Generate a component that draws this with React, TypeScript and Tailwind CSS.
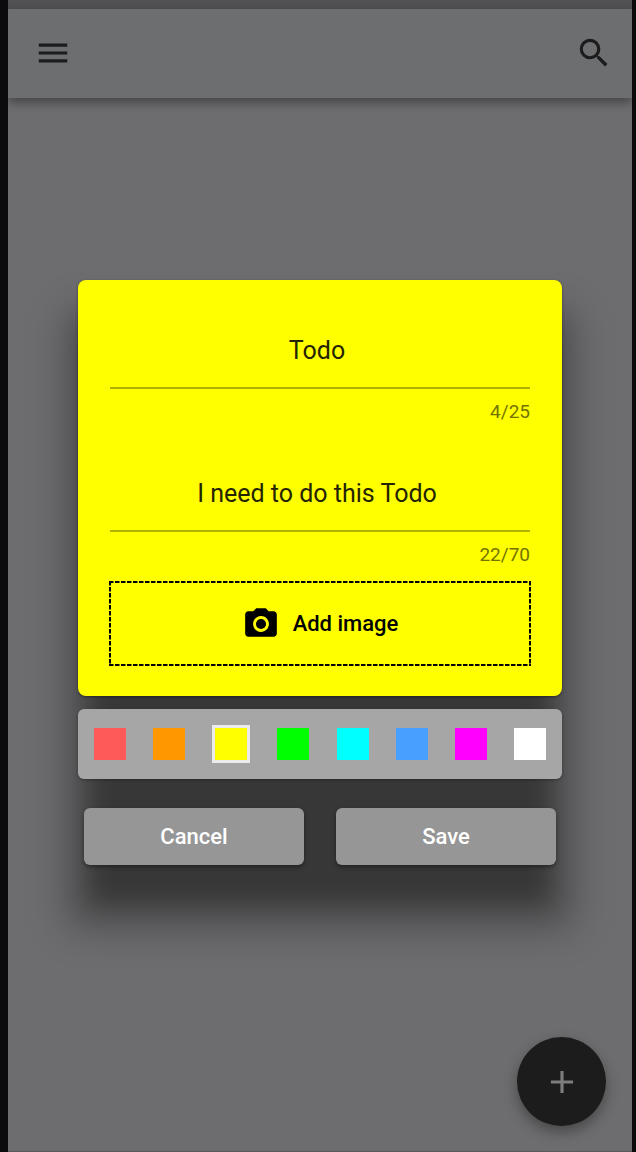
import { useState } from "react";
import { MdAdd, MdCameraAlt, MdMenu, MdSearch } from "react-icons/md";

const swatches = [
  { name: "Red", color: "bg-[#ff5a5a]" },
  { name: "Orange", color: "bg-[#ff9800]" },
  { name: "Yellow", color: "bg-[#ffff00]" },
  { name: "Green", color: "bg-[#00ff00]" },
  { name: "Cyan", color: "bg-[#00ffff]" },
  { name: "Blue", color: "bg-[#489fff]" },
  { name: "Magenta", color: "bg-[#ff00ff]" },
  { name: "White", color: "bg-white" },
];

type FieldProps = {
  label: string;
  value: string;
  max: number;
  onChange: (value: string) => void;
};

function Field({ label, value, max, onChange }: FieldProps) {
  return (
    <label className="flex flex-col">
      <input
        aria-label={label}
        value={value}
        maxLength={max}
        onChange={(e) => onChange(e.target.value)}
        className="h-[77px] w-full border-b-2 border-[#b0b000] bg-transparent pt-0.5 pr-1.5 text-center text-[25px] text-[#242400] outline-none"
      />
      <span className="mt-[11px] self-end text-[19px] leading-6 text-[#737300]">
        {value.length}/{max}
      </span>
    </label>
  );
}

function Header() {
  return (
    <header className="flex h-[89px] items-center justify-between bg-[#6d6e70] pr-[19px] pb-0.5 pl-[26px] text-[#1c1c1c] shadow-[0_4px_10px_rgba(0,0,0,0.4)]">
      <button type="button" aria-label="Menu">
        <MdMenu size={38} />
      </button>
      <button type="button" aria-label="Search">
        <MdSearch size={38} />
      </button>
    </header>
  );
}

function TodoDialog() {
  const [title, setTitle] = useState("Todo");
  const [body, setBody] = useState("I need to do this Todo");
  const [selected, setSelected] = useState(2);

  return (
    <form
      role="dialog"
      aria-label="Todo"
      className="relative w-full"
      onSubmit={(e) => e.preventDefault()}
    >
      <div className="absolute inset-x-[-10px] top-8 bottom-[-56px] bg-black/30 blur-[19px]" />
      <div className="absolute inset-x-3 top-10 bottom-[-32px] bg-black/27 blur-[12px]" />

      <div className="relative flex flex-col">
        <section
          className={`rounded-lg px-8 pt-8 pb-[30px] shadow-[0_1px_3px_rgba(0,0,0,0.4)] ${swatches[selected].color}`}
        >
          <div className="flex flex-col gap-[31px]">
            <Field label="Title" value={title} max={25} onChange={setTitle} />
            <Field label="Description" value={body} max={70} onChange={setBody} />
          </div>
          <button
            type="button"
            className="-mx-px mt-3.5 flex h-[85px] w-[calc(100%+2px)] items-center justify-center gap-[13px] text-[22px] font-medium text-black [background:repeating-linear-gradient(90deg,#000_0_4px,transparent_5px_6px)_top/100%_2px_no-repeat,repeating-linear-gradient(90deg,#000_0_4px,transparent_5px_6px)_bottom/100%_2px_no-repeat,repeating-linear-gradient(180deg,#000_0_4px,transparent_5px_6px)_left/2px_100%_no-repeat,repeating-linear-gradient(180deg,#000_0_4px,transparent_5px_6px)_right/2px_100%_no-repeat]"
          >
            <MdCameraAlt size={38} />
            Add image
          </button>
        </section>

        <div
          role="radiogroup"
          aria-label="Colour"
          className="mt-[13px] flex h-[70px] items-center justify-between rounded-md bg-[#a6a6a6] px-4 shadow-[0_1px_3px_rgba(0,0,0,0.3)]"
        >
          {swatches.map((s, i) => (
            <input
              key={s.name}
              type="radio"
              name="colour"
              aria-label={s.name}
              checked={selected === i}
              onChange={() => setSelected(i)}
              className={`box-content size-8 cursor-pointer appearance-none border-[#ebebeb] checked:border-3 ${s.color}`}
            />
          ))}
        </div>

        <div className="mt-[29px] mb-1.5 grid grid-cols-2 gap-8 px-1.5">
          <button
            type="button"
            className="h-[57px] rounded-md bg-[#969696] text-[22px] font-medium text-white shadow-[0_2px_4px_rgba(0,0,0,0.4)]"
          >
            Cancel
          </button>
          <button
            type="submit"
            className="h-[57px] rounded-md bg-[#969696] text-[22px] font-medium text-white shadow-[0_2px_4px_rgba(0,0,0,0.4)]"
          >
            Save
          </button>
        </div>
      </div>
    </form>
  );
}

export default function App() {
  return (
    <div className="flex min-h-screen bg-[#0b0a0c] pr-1 pl-2 font-[Roboto,sans-serif]">
      <main className="relative flex flex-1 flex-col overflow-hidden border-b border-[#5a585c] bg-[#6d6d6f]">
        <div className="h-[9px] bg-[#525254]" />
        <Header />
        <button
          type="button"
          aria-label="Add todo"
          className="absolute right-[26px] bottom-[25px] flex size-[89px] items-center justify-center rounded-full bg-[#1c1c1c] text-[#7d7d7d] shadow-[0_6px_14px_rgba(0,0,0,0.35)]"
        >
          <MdAdd size={38} />
        </button>
        <div className="absolute inset-0 flex items-center justify-center px-[70px]">
          <TodoDialog />
        </div>
      </main>
    </div>
  );
}
